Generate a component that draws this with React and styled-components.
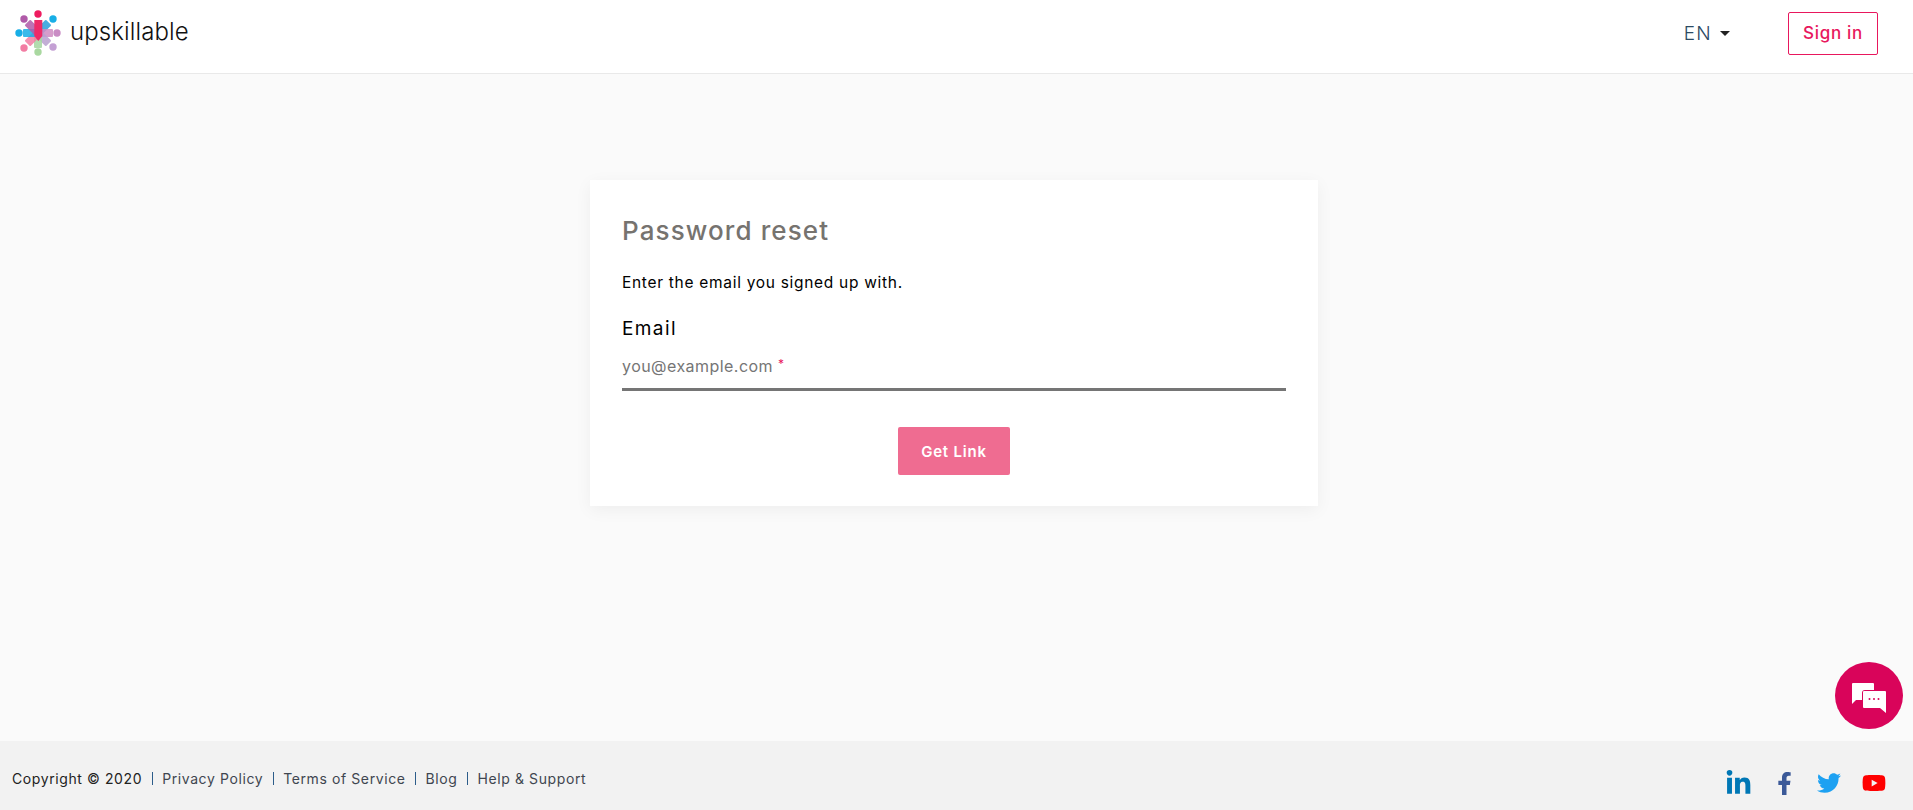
import React from 'react';
import styled, { createGlobalStyle } from 'styled-components';
import { FaLinkedinIn, FaFacebookF, FaTwitter, FaYoutube } from 'react-icons/fa';

const GlobalStyle = createGlobalStyle`
  html, body { margin: 0; padding: 0; }
  body {
    font-family: "Inter", "Open Sans", sans-serif;
    background: #fafafa;
  }
`;

const Page = styled.div`
  min-height: 100vh;
  display: flex;
  flex-direction: column;
`;

const Header = styled.header`
  height: 74px;
  box-sizing: border-box;
  background: #fff;
  border-bottom: 1px solid #e9e9e9;
  display: flex;
  align-items: center;
  padding: 0 35px 7px 15px;
`;

const Brand = styled.div`
  display: flex;
  align-items: center;
  gap: 9px;
  flex: 1;
`;

const BrandName = styled.span`
  font-weight: 300;
  font-size: 24px;
  letter-spacing: 0.1px;
  margin-top: -3px;
  color: #111;
`;

const Lang = styled.div`
  display: flex;
  align-items: center;
  gap: 8px;
  font-weight: 300;
  font-size: 19px;
  letter-spacing: 1.2px;
  color: #2c4a63;
  margin-right: 58px;
`;

const Caret = styled.span`
  width: 0;
  height: 0;
  border-left: 5.5px solid transparent;
  border-right: 5.5px solid transparent;
  border-top: 5px solid #222;
`;

const SignIn = styled.button`
  width: 90px;
  height: 43px;
  padding: 0;
  background: #fff;
  border: 1px solid #e8175d;
  border-radius: 2px;
  color: #e8175d;
  font-family: inherit;
  font-size: 17px;
  letter-spacing: 0.7px;
  font-weight: 500;
`;

const Main = styled.main`
  flex: 1;
  display: flex;
  justify-content: center;
  align-items: flex-start;
  padding: 106px 5px 0 0;
`;

const Card = styled.section`
  width: 728px;
  height: 326px;
  box-sizing: border-box;
  padding: 35px 32px 0;
  background: #fff;
  box-shadow: 0 4px 16px rgba(0, 0, 0, 0.05);
  display: flex;
  flex-direction: column;
`;

const Title = styled.h1`
  margin: 0;
  font-size: 26px;
  line-height: 32px;
  letter-spacing: 1.1px;
  font-weight: 500;
  color: #76736f;
`;

const Hint = styled.p`
  margin: 25px 0 0;
  font-size: 15.5px;
  line-height: 22px;
  letter-spacing: 0.7px;
  color: #000;
`;

const Label = styled.label`
  margin-top: 23px;
  font-size: 19px;
  line-height: 24px;
  letter-spacing: 1.4px;
  color: #000;
`;

const Field = styled.div`
  margin-top: 4px;
  height: 46px;
  box-sizing: border-box;
  padding-bottom: 2px;
  border-bottom: 3px solid #757575;
  display: flex;
  align-items: center;
  font-size: 16px;
  letter-spacing: 0.45px;
  color: #757575;
`;

const Star = styled.span`
  color: #e8175d;
  font-size: 12px;
  margin-left: 5px;
  margin-top: -4px;
`;

const GetLink = styled.button`
  align-self: center;
  margin-top: 36px;
  width: 112px;
  height: 48px;
  padding: 0;
  border: 0;
  border-radius: 2px;
  background: #ef6c91;
  color: #fff;
  font-family: inherit;
  font-size: 15px;
  letter-spacing: 0.8px;
  font-weight: 600;
`;

const Footer = styled.footer`
  height: 69px;
  background: #f2f2f2;
  display: flex;
  align-items: center;
  justify-content: space-between;
  padding: 0 27px 0 12px;
`;

const FooterLinks = styled.div`
  display: flex;
  align-items: center;
  font-size: 14px;
  letter-spacing: 0.6px;
  color: #3f4650;
  margin-top: 5px;
`;

const Copy = styled.span`
  color: #222;
`;

const Sep = styled.span`
  width: 1px;
  height: 13px;
  background: #2c5c8a;
  margin: 0 9.5px;
`;

const Socials = styled.div`
  display: flex;
  align-items: center;
  gap: 21px;
  margin-top: 15px;
`;

const Social = styled.span`
  display: flex;
  color: ${(p) => p.$color};
  svg {
    width: auto;
    height: ${(p) => p.$size}px;
  }
`;

const ChatButton = styled.button`
  position: fixed;
  right: 10px;
  bottom: 81px;
  width: 68px;
  height: 67px;
  padding: 5px 0 0;
  border: 0;
  border-radius: 50%;
  background: #d9045a;
  display: flex;
  align-items: center;
  justify-content: center;
`;

const petals = [
  { angle: 45, color: '#2a9fdc' },
  { angle: 90, color: '#cf8cc2' },
  { angle: 135, color: '#b9a0cf' },
  { angle: 180, color: '#a4d6a0' },
  { angle: 225, color: '#f27da3' },
  { angle: 270, color: '#18aee6' },
  { angle: 315, color: '#b05aa8' },
];

const dots = [
  { cx: 23, cy: 5, color: '#ee1c60' },
  { cx: 38, cy: 10, color: '#18aee6' },
  { cx: 42, cy: 24, color: '#c98cc4' },
  { cx: 38, cy: 38, color: '#c4a0d4' },
  { cx: 23, cy: 43, color: '#a9d8a0' },
  { cx: 9, cy: 39, color: '#f27da3' },
  { cx: 4, cy: 24, color: '#18aee6' },
  { cx: 9, cy: 10, color: '#b05aa8' },
];

const Logo = () => (
  <svg width="46" height="48" viewBox="0 0 46 48">
    {dots.map((d) => (
      <circle key={d.cx + '-' + d.cy} cx={d.cx} cy={d.cy} r="3.7" fill={d.color} />
    ))}
    {petals.map((p) => (
      <rect
        key={p.angle}
        x="19"
        y="9"
        width="8"
        height="15"
        rx="1"
        fill={p.color}
        opacity="0.85"
        transform={`rotate(${p.angle} 23 24)`}
      />
    ))}
    <path d="M19.3 11h8v16l-4 5-4-5z" fill="#ee2a68" />
  </svg>
);

const ChatIcon = () => (
  <svg width="34" height="30" viewBox="0 0 34 30">
    <path d="M1 0h20a1 1 0 0 1 1 1v6h-9a3 3 0 0 0-3 3v7H4l-4 4V1a1 1 0 0 1 1-1z" fill="#fff" />
    <path d="M12 8h21a1 1 0 0 1 1 1v21l-6-5H12a1 1 0 0 1-1-1V9a1 1 0 0 1 1-1z" fill="#fff" />
    <circle cx="17.5" cy="16" r="1" fill="#d9045a" />
    <circle cx="22" cy="16" r="1" fill="#d9045a" />
    <circle cx="26.5" cy="16" r="1" fill="#d9045a" />
  </svg>
);

export default function App() {
  return (
    <Page>
      <GlobalStyle />
      <Header>
        <Brand>
          <Logo />
          <BrandName>upskillable</BrandName>
        </Brand>
        <Lang>
          EN <Caret />
        </Lang>
        <SignIn>Sign in</SignIn>
      </Header>
      <Main>
        <Card>
          <Title>Password reset</Title>
          <Hint>Enter the email you signed up with.</Hint>
          <Label>Email</Label>
          <Field>
            you@example.com<Star>*</Star>
          </Field>
          <GetLink>Get Link</GetLink>
        </Card>
      </Main>
      <Footer>
        <FooterLinks>
          <Copy>Copyright © 2020</Copy>
          <Sep />
          Privacy Policy
          <Sep />
          Terms of Service
          <Sep />
          Blog
          <Sep />
          Help &amp; Support
        </FooterLinks>
        <Socials>
          <Social $color="#0077b5" $size={27}><FaLinkedinIn /></Social>
          <Social $color="#3b5998" $size={23}><FaFacebookF /></Social>
          <Social $color="#1da1f2" $size={24}><FaTwitter /></Social>
          <Social $color="#ff0000" $size={24}><FaYoutube /></Social>
        </Socials>
      </Footer>
      <ChatButton>
        <ChatIcon />
      </ChatButton>
    </Page>
  );
}
